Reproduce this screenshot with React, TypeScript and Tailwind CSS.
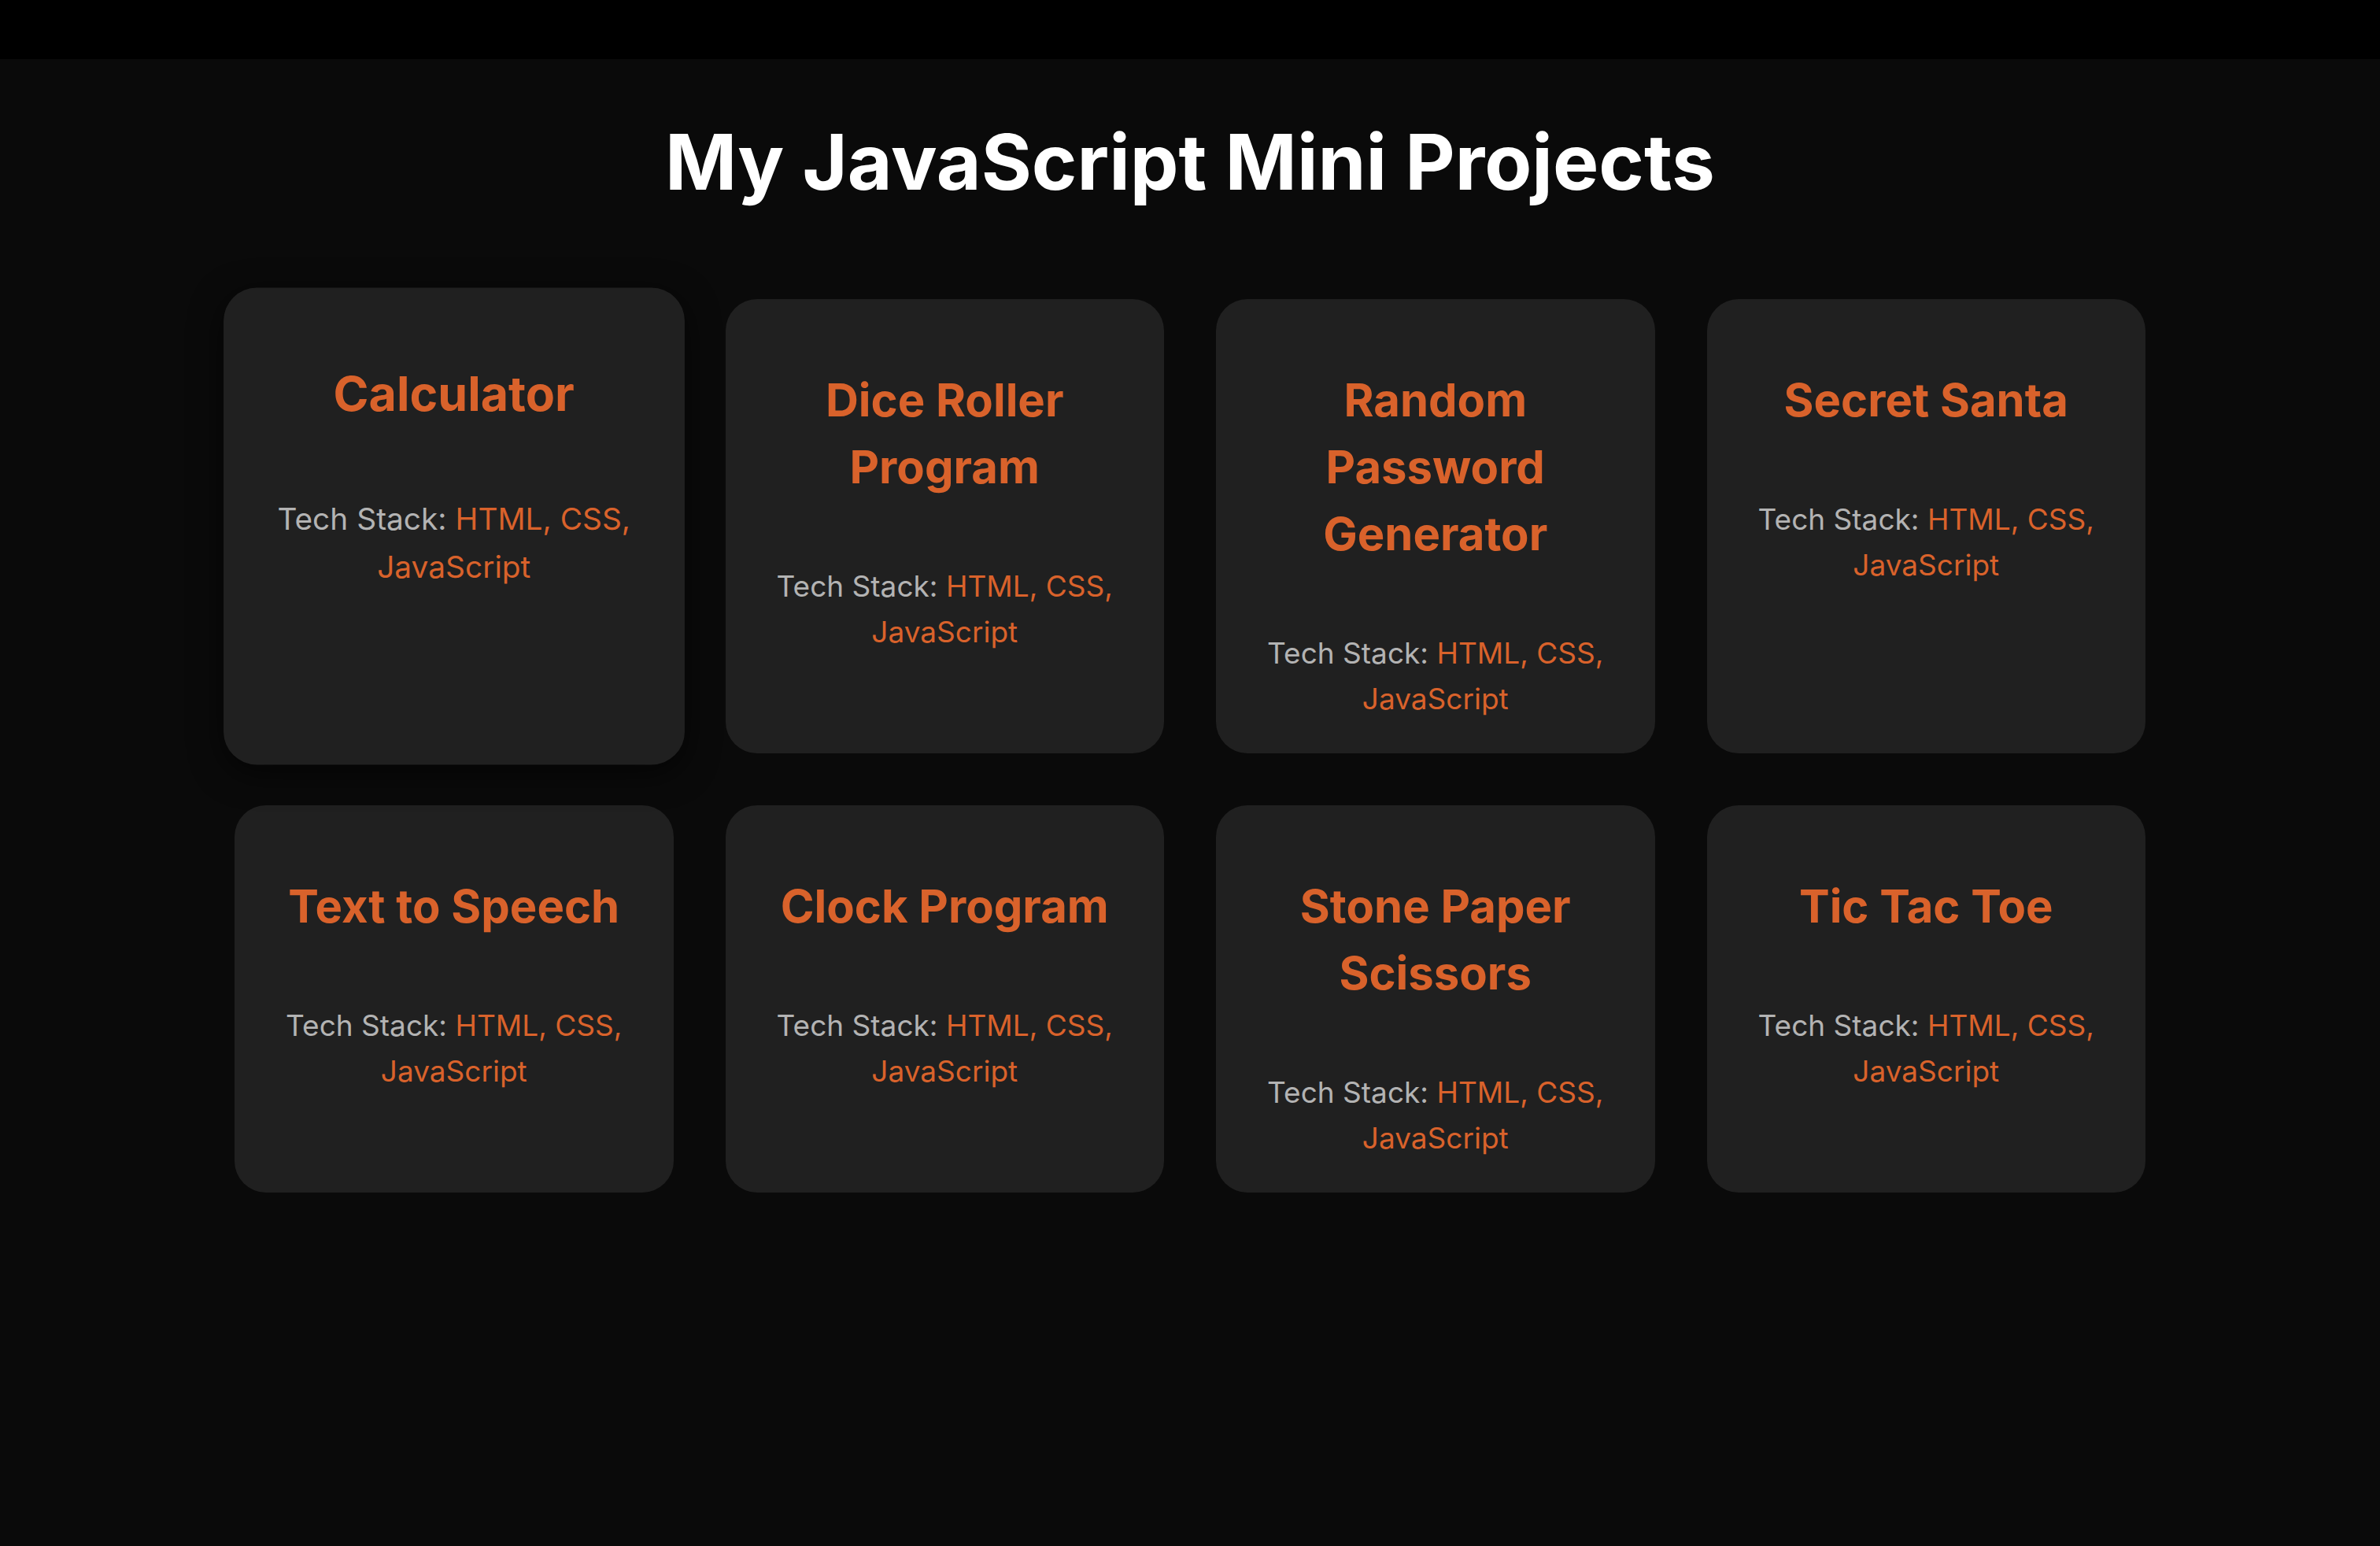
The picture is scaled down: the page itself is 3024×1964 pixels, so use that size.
import React from "react";

const projects: { title: string }[] = [
  { title: "Calculator" },
  { title: "Dice Roller Program" },
  { title: "Random Password Generator" },
  { title: "Secret Santa" },
  { title: "Text to Speech" },
  { title: "Clock Program" },
  { title: "Stone Paper Scissors" },
  { title: "Tic Tac Toe" },
];

function Card({ title, active }: { title: string; active?: boolean }) {
  return (
    <div
      className={
        "rounded-[40px] bg-[#202020] px-[40px] pt-[86px] pb-[40px] text-center " +
        (active ? "scale-105 shadow-[0_10px_40px_rgba(0,0,0,0.6)]" : "")
      }
    >
      <h2 className="text-[58px] leading-[85px] font-bold text-[#d9622b]">{title}</h2>
      <p className="mt-[80px] text-[37px] leading-[58px] text-[#b3b3b3]">
        Tech Stack: <span className="text-[#d9622b]">HTML, CSS, JavaScript</span>
      </p>
    </div>
  );
}

export default function App() {
  return (
    <div className="min-h-[1964px] bg-[#0a0a0a] font-['Inter','Open_Sans',sans-serif]">
      <div className="h-[75px] bg-black" />
      <h1 className="pt-[70px] text-center text-[98px] leading-[122px] font-bold text-white">
        My JavaScript Mini Projects
      </h1>
      <div className="mx-auto mt-[113px] grid w-[2428px] grid-cols-4 gap-[66px]">
        {projects.map((p, i) => (
          <Card key={p.title} title={p.title} active={i === 0} />
        ))}
      </div>
    </div>
  );
}
